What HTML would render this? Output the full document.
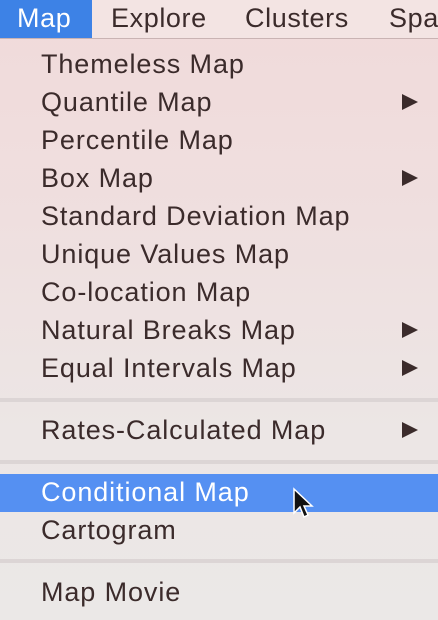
<!DOCTYPE html>
<html><head><style>
html,body{margin:0;padding:0;}
body{width:438px;height:620px;overflow:hidden;position:relative;font-family:"Liberation Sans",sans-serif;
background:linear-gradient(180deg,#f1dada 0%,#efdfdf 35%,#ece6e5 70%,#ebe8e7 100%);color:#3b2b2b;}
.bar{position:absolute;left:0;top:0;width:438px;height:38px;background:#f3e4e3;border-bottom:1px solid #c9b3b3;}
.bar span{position:absolute;top:3px;font-size:27px;line-height:30px;letter-spacing:0.6px;}
.sel{position:absolute;left:0;top:0;width:92px;height:38px;background:#3d82e6;}
.it{position:absolute;left:41px;font-size:27px;line-height:30px;white-space:nowrap;letter-spacing:0.9px;}
.ar{position:absolute;left:402px;width:0;height:0;border-top:8px solid transparent;border-bottom:8px solid transparent;border-left:16px solid #3b2b2b;}
.sep{position:absolute;left:0;width:438px;height:4px;background:#dcd5d5;}
.hl{position:absolute;left:0;top:474px;width:438px;height:38px;background:#5590f2;}
</style></head><body>
<div class="bar"><div class="sel"></div>
<span style="left:17px;color:#fff">Map</span>
<span style="left:111px">Explore</span>
<span style="left:245px">Clusters</span>
<span style="left:389px">Spa</span></div>
<div class="it" style="top:49px">Themeless Map</div>
<div class="it" style="top:87px">Quantile Map</div><div class="ar" style="top:94px"></div>
<div class="it" style="top:125px">Percentile Map</div>
<div class="it" style="top:163px">Box Map</div><div class="ar" style="top:170px"></div>
<div class="it" style="top:201px">Standard Deviation Map</div>
<div class="it" style="top:239px">Unique Values Map</div>
<div class="it" style="top:277px">Co-location Map</div>
<div class="it" style="top:315px">Natural Breaks Map</div><div class="ar" style="top:322px"></div>
<div class="it" style="top:353px">Equal Intervals Map</div><div class="ar" style="top:360px"></div>
<div class="sep" style="top:398px"></div>
<div class="it" style="top:415px">Rates-Calculated Map</div><div class="ar" style="top:422px"></div>
<div class="sep" style="top:460px"></div>
<div class="hl"></div>
<div class="it" style="top:477px;color:#fff">Conditional Map</div>
<svg style="position:absolute;left:292px;top:487px" width="24" height="36" viewBox="0 0 24 36"><path d="M2 2 L2 26 L8 20 L12 30 L16 28 L12 19 L20 19 Z" fill="#111" stroke="#fff" stroke-width="1.5"/></svg>
<div class="it" style="top:515px">Cartogram</div>
<div class="sep" style="top:559px"></div>
<div class="it" style="top:577px">Map Movie</div>
</body></html>
